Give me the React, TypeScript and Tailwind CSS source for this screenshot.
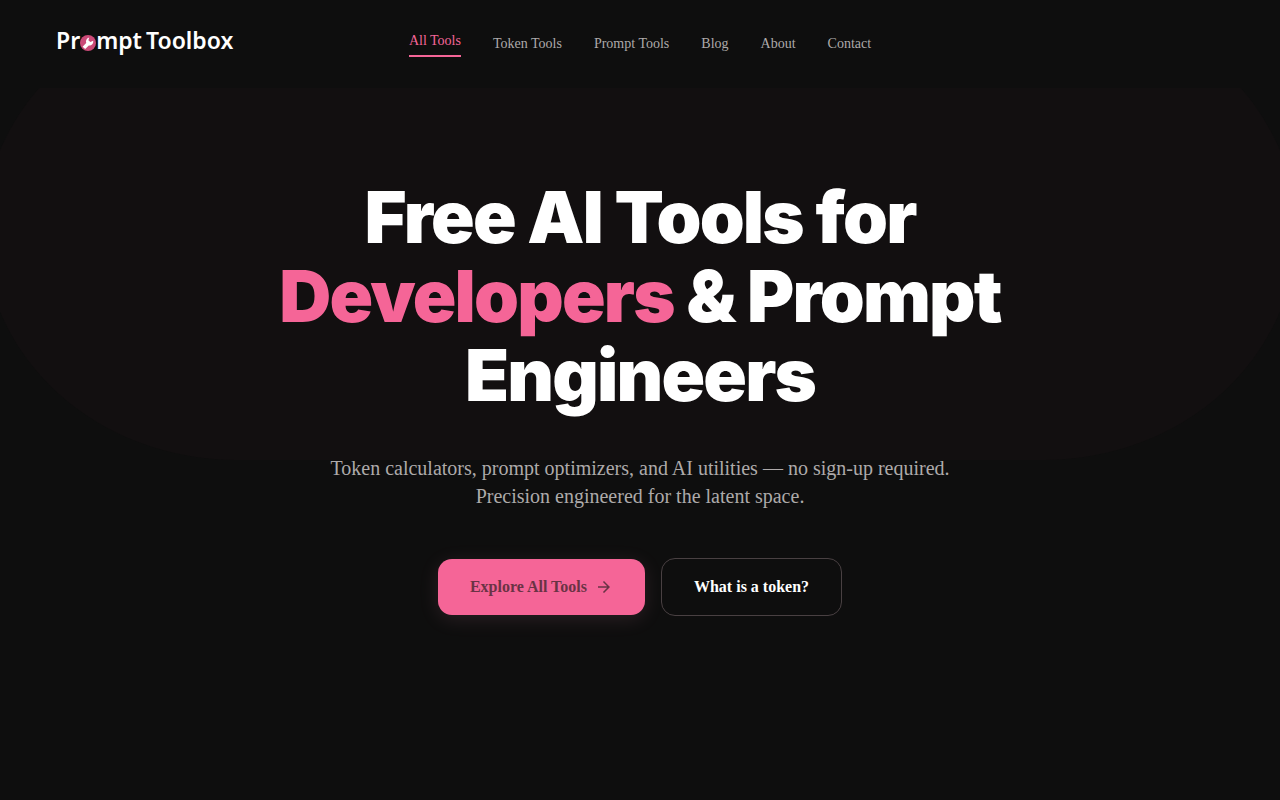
const links = [
  { label: "All Tools", href: "#tools", active: true },
  { label: "Token Tools", href: "#token-tools", active: false },
  { label: "Prompt Tools", href: "#prompt-tools", active: false },
  { label: "Blog", href: "#blog", active: false },
  { label: "About", href: "#about", active: false },
  { label: "Contact", href: "#contact", active: false },
] as const;

function Logo() {
  return (
    <a
      href="#home"
      aria-label="Prompt Toolbox"
      className="flex items-baseline gap-1 pb-2 font-['Noto_Sans',sans-serif] text-[23px] leading-8 font-semibold text-white"
    >
      <span className="flex items-baseline">
        Pr
        <svg viewBox="0 0 16 16" className="size-4 translate-y-0.5" aria-hidden="true">
          <circle cx="8" cy="8" r="8" fill="#cb4a78" />
          <path
            d="M2.600 11.800 6.200 8C5.400 5.600 6.600 3 9.200 2.400L8.400 5.200l2 1.800 2.800-1.200c.4 2.800-1.600 5-4.400 4.800L5.200 14Z"
            fill="#fff"
          />
        </svg>
        mpt
      </span>
      <span>Toolbox</span>
    </a>
  );
}

function Header() {
  return (
    <header className="grid h-[88px] grid-cols-[1fr_auto_1fr] items-center px-14">
      <Logo />
      <nav className="flex items-center gap-8 text-sm">
        {links.map((l) => (
          <a
            key={l.label}
            href={l.href}
            className={l.active ? "border-b-2 border-[#f56597] pb-1 text-[#f56597]" : "text-[#adaaaa]"}
          >
            {l.label}
          </a>
        ))}
      </nav>
    </header>
  );
}

function Hero() {
  return (
    <section className="relative overflow-hidden px-6 pt-[89px] pb-40 text-center">
      <div className="pointer-events-none absolute inset-x-[-16px] top-[-86px] h-[458px] rounded-[252px/229px] bg-[#120f10]" />
      <div className="relative mx-auto max-w-4xl">
        <h1 className="font-['Inter',sans-serif] text-7xl leading-[79px] font-black tracking-tight text-white">
          Free AI Tools for
          <br />
          <span className="text-[#f56597]">Developers</span> &amp; Prompt
          <br />
          Engineers
        </h1>
        <p className="mx-auto mt-10 max-w-2xl text-xl leading-7 text-[#adaaaa]">
          Token calculators, prompt optimizers, and AI utilities — no sign-up required.
          <br />
          Precision engineered for the latent space.
        </p>
        <div className="mt-12 flex flex-wrap items-center justify-center gap-4 font-bold">
          <button
            type="button"
            className="flex h-14 items-center gap-2 rounded-[14px] bg-[#f56597] px-8 text-[#6a3345] shadow-[0_4px_20px_rgba(247,160,190,0.12)]"
          >
            Explore All Tools
            <svg viewBox="0 0 24 24" className="size-[18px]" fill="currentColor" aria-hidden="true">
              <path d="m12 4-1.410 1.410L16.170 11H4v2h12.170l-5.580 5.590L12 20l8-8z" />
            </svg>
          </button>
          <button type="button" className="h-[58px] rounded-[14px] border border-[#494042] px-8 text-white">
            What is a token?
          </button>
        </div>
      </div>
    </section>
  );
}

export default function App() {
  return (
    <div className="min-h-screen bg-[#0e0e0e] font-['Liberation_Serif',serif]">
      <Header />
      <main>
        <Hero />
      </main>
    </div>
  );
}
